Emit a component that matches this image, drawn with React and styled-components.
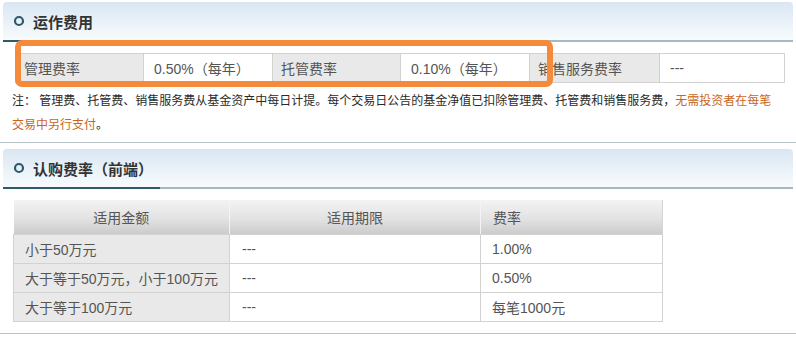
import React from "react";
import styled, { createGlobalStyle } from "styled-components";

const GlobalStyle = createGlobalStyle`
  html, body {
    margin: 0;
    padding: 0;
    background: #fff;
  }
  body {
    font-family: "Liberation Sans", "Noto Sans CJK SC", sans-serif;
    color: #333;
  }
`;

const Page = styled.div`
  position: relative;
  width: 796px;
  padding-top: 2px;
`;

const Section = styled.section`
  border-bottom: 1px solid #b9c4c9;
  padding-bottom: ${({ $bottom }) => $bottom}px;
  margin-bottom: 6px;
`;

const Header = styled.div`
  display: flex;
  align-items: stretch;
  height: 40px;
  box-sizing: border-box;
  margin: 0 3px;
  border-top-left-radius: 4px;
  border-top-right-radius: 4px;
  background: linear-gradient(to bottom, #d9e6f2 0%, #ecf3f9 60%, #f8fbfd 100%);
  border-bottom: 2px solid #a5b9c2;
`;

const Title = styled.h3`
  display: flex;
  align-items: center;
  gap: 8px;
  margin: 0 0 -2px 0;
  width: 157px;
  box-sizing: border-box;
  padding-left: 10px;
  font-size: 15px;
  font-weight: 700;
  color: #333;
  border-bottom: 2px solid #2f5b68;
`;

const Ring = () => (
  <svg width="12" height="12" viewBox="0 0 12 12">
    <circle cx="6" cy="6" r="4" fill="none" stroke="#2c5a6b" strokeWidth="2.2" />
  </svg>
);

const FeeTable = styled.table`
  border-collapse: collapse;
  margin: ${({ $top }) => $top}px 0 0 ${({ $left }) => $left}px;
  font-size: 14px;
  color: #555;
`;

const Cell = styled.td`
  height: 29px;
  box-sizing: border-box;
  padding: 0 0 0 ${({ $pad }) => $pad || 10}px;
  width: ${({ $w }) => $w}px;
  border: 1px solid #d2d2d2;
  background: ${({ $label }) => ($label ? "#e9e9e9" : "#fff")};
  white-space: nowrap;
  text-align: left;
`;

const HeadCell = styled.th`
  height: 34px;
  box-sizing: border-box;
  padding: 0;
  padding-left: ${({ $align }) => ($align === "left" ? "12px" : "0")};
  width: ${({ $w }) => $w}px;
  font-weight: 400;
  font-size: 14px;
  color: #555;
  text-align: ${({ $align }) => $align || "center"};
  background: linear-gradient(to bottom, #f3f3f3 0%, #e2e2e2 55%, #cbcbcb 100%);
  border-right: 1px solid #f4f4f4;
  border-bottom: 1px solid #d2d2d2;
  &:last-child {
    border-right: 1px solid #d6d6d6;
  }
`;

const Note = styled.p`
  margin: 6px 0 0 12px;
  max-width: 766px;
  font-size: 12px;
  line-height: 24px;
  color: #2a2a2a;
`;

const Warn = styled.span`
  color: #c9661c;
`;

const Highlight = styled.div`
  position: absolute;
  left: 15px;
  top: 40px;
  width: 538px;
  height: 47px;
  box-sizing: border-box;
  border: 6px solid #f58a3a;
  border-radius: 7px;
  pointer-events: none;
`;

const runFees = [
  { label: "管理费率", value: "0.50%（每年）" },
  { label: "托管费率", value: "0.10%（每年）" },
  { label: "销售服务费率", value: "---" },
];

const subscribeRows = [
  ["小于50万元", "---", "1.00%"],
  ["大于等于50万元，小于100万元", "---", "0.50%"],
  ["大于等于100万元", "---", "每笔1000元"],
];

export default function App() {
  return (
    <>
      <GlobalStyle />
      <Page>
        <Section $bottom={5}>
          <Header>
            <Title>
              <Ring />
              运作费用
            </Title>
          </Header>
          <FeeTable $top={11} $left={15}>
            <tbody>
              <tr>
                {runFees.map((f, i) => (
                  <React.Fragment key={f.label}>
                    <Cell $label $w={i === 2 ? 130 : 128} $pad={8}>
                      {f.label}
                    </Cell>
                    <Cell $w={i === 2 ? 125 : 129}>{f.value}</Cell>
                  </React.Fragment>
                ))}
              </tr>
            </tbody>
          </FeeTable>
          <Note>
            注： 管理费、托管费、销售服务费从基金资产中每日计提。每个交易日公告的基金净值已扣除管理费、托管费和销售服务费，
            <Warn>无需投资者在每笔</Warn>
            <Warn>交易中另行支付</Warn>。
          </Note>
        </Section>

        <Section $bottom={11}>
          <Header>
            <Title>
              <Ring />
              认购费率（前端）
            </Title>
          </Header>
          <FeeTable $top={11} $left={13}>
            <thead>
              <tr>
                <HeadCell $w={216}>适用金额</HeadCell>
                <HeadCell $w={251}>适用期限</HeadCell>
                <HeadCell $w={182} $align="left">
                  费率
                </HeadCell>
              </tr>
            </thead>
            <tbody>
              {subscribeRows.map((r) => (
                <tr key={r[0]}>
                  <Cell $label $w={216} $pad={11}>
                    {r[0]}
                  </Cell>
                  <Cell $w={251} $pad={12}>
                    {r[1]}
                  </Cell>
                  <Cell $w={182} $pad={11}>
                    {r[2]}
                  </Cell>
                </tr>
              ))}
            </tbody>
          </FeeTable>
        </Section>
        <Highlight />
      </Page>
    </>
  );
}
